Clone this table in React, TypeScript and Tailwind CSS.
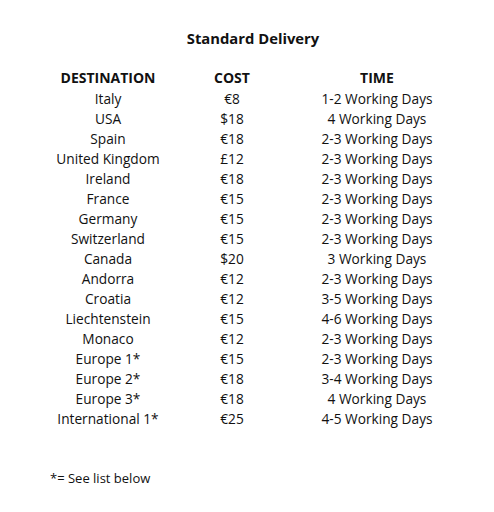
const rows: [string, string, string][] = [
  ["Italy", "€8", "1-2 Working Days"],
  ["USA", "$18", "4 Working Days"],
  ["Spain", "€18", "2-3 Working Days"],
  ["United Kingdom", "£12", "2-3 Working Days"],
  ["Ireland", "€18", "2-3 Working Days"],
  ["France", "€15", "2-3 Working Days"],
  ["Germany", "€15", "2-3 Working Days"],
  ["Switzerland", "€15", "2-3 Working Days"],
  ["Canada", "$20", "3 Working Days"],
  ["Andorra", "€12", "2-3 Working Days"],
  ["Croatia", "€12", "3-5 Working Days"],
  ["Liechtenstein", "€15", "4-6 Working Days"],
  ["Monaco", "€12", "2-3 Working Days"],
  ["Europe 1*", "€15", "2-3 Working Days"],
  ["Europe 2*", "€18", "3-4 Working Days"],
  ["Europe 3*", "€18", "4 Working Days"],
  ["International 1*", "€25", "4-5 Working Days"],
];

export default function App() {
  return (
    <div
      className="w-[494px] h-[512px] bg-white text-[#111] pt-[28px]"
      style={{ fontFamily: "'Open Sans', 'Liberation Sans', sans-serif" }}
    >
      <h2 className="w-[494px] text-center text-[14.8px] leading-[20px] font-bold pl-[12px]">
        Standard Delivery
      </h2>

      <div className="ml-[40px] mt-[20px] grid grid-cols-[136px_112px_178px] text-center">
        {["DESTINATION", "COST", "TIME"].map((h) => (
          <div key={h} className="h-[21px] text-[14px] leading-[20px] font-bold">
            {h}
          </div>
        ))}
        {rows.map(([d, c, t]) => (
          <div key={d} className="contents">
            <div className="h-[20px] text-[13.7px] leading-[20px]">{d}</div>
            <div className="h-[20px] text-[13.7px] leading-[20px]">{c}</div>
            <div className="h-[20px] text-[13.7px] leading-[20px]">{t}</div>
          </div>
        ))}
      </div>

      <p className="ml-[50px] mt-[39px] text-[13px] leading-[20px]">*= See list below</p>
    </div>
  );
}
